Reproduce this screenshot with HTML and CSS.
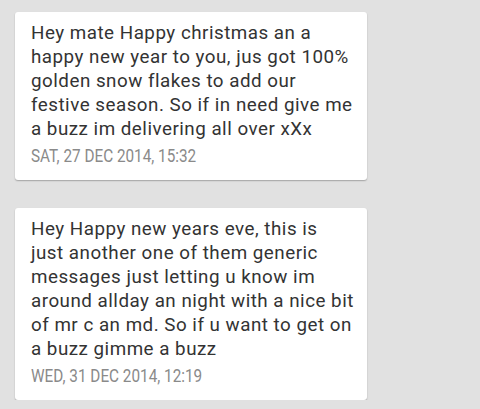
FILE: index.html
```html
<!DOCTYPE html>
<html>
<head>
<meta charset="utf-8">
<link rel="stylesheet" href="styles.css">
</head>
<body>
<div class="list">
  <div class="card">
    <div class="msg">Hey mate Happy christmas an a<br>happy new year to you, jus got 100%<br>golden snow flakes to add our<br>festive season. So if in need give me<br>a buzz im delivering all over xXx</div>
    <div class="time">SAT, 27 DEC 2014, 15:32</div>
  </div>
  <div class="card">
    <div class="msg">Hey Happy new years eve, this is<br>just another one of them generic<br>messages just letting u know im<br>around allday an night with a nice bit<br>of mr c an md. So if u want to get on<br>a buzz gimme a buzz</div>
    <div class="time">WED, 31 DEC 2014, 12:19</div>
  </div>
</div>
</body>
</html>
```
FILE: styles.css
```css
html, body {
  margin: 0;
  padding: 0;
  background: #e1e1e1;
  font-family: Roboto, "Noto Sans", sans-serif;
}
.list {
  display: flex;
  flex-direction: column;
  gap: 28px;
  padding: 12px 0 0 15px;
}
.card {
  width: 352px;
  box-sizing: border-box;
  background: #ffffff;
  border-radius: 3px;
  box-shadow: 0 1px 1.5px rgba(0,0,0,0.28);
  padding: 9px 4px 14px 16px;
}
.msg {
  font-size: 18.8px;
  line-height: 24px;
  letter-spacing: 0.5px;
  color: #333333;
  white-space: nowrap;
}
.time {
  margin-top: 5px;
  font-size: 18px;
  line-height: 20px;
  color: #8a8a8a;
  transform: scaleX(0.85);
  transform-origin: left center;
  white-space: nowrap;
}
```
